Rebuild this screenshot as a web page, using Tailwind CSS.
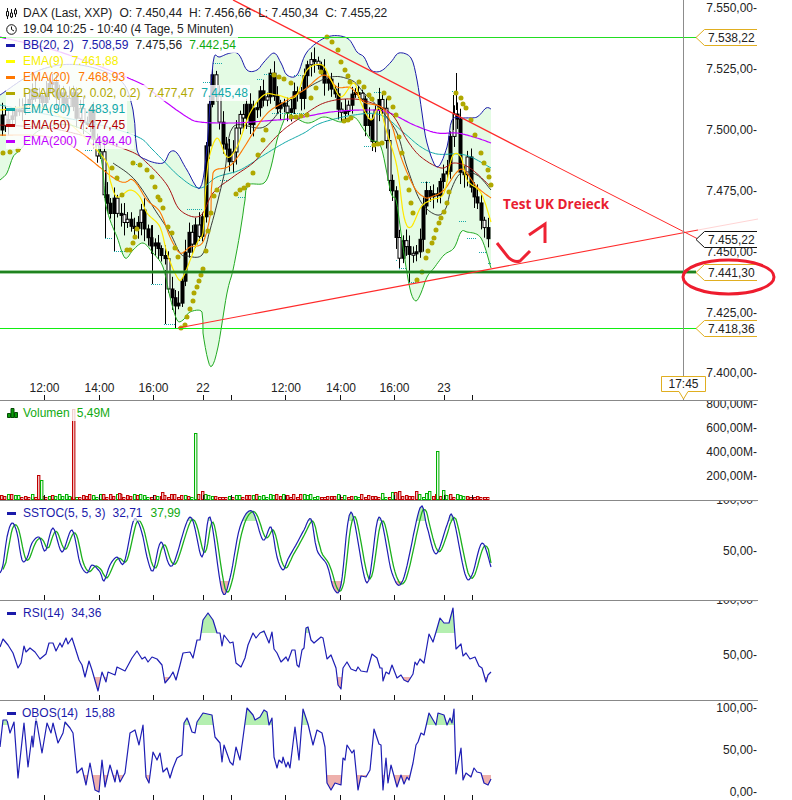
<!DOCTYPE html>
<html lang="de">
<head>
<meta charset="UTF-8">
<title>DAX Chart</title>
<script src="https://cdn.jsdelivr.net/npm/@tailwindcss/browser@4"></script>
</head>
<body class="bg-white">
<div class="w-[792px] h-[800px] overflow-hidden font-['Liberation_Sans',sans-serif] text-[12px] leading-[16px] text-[#222]">

  <!-- Main price panel -->
  <section class="relative h-[400px]">
    <svg id="main" class="block" width="792" height="400" viewBox="0 0 792 400">
      <polygon id="band" fill="#e4fbe4"></polygon>
      <g id="candles"></g>
      <path id="ticks" fill="none" stroke="#18a8a8" stroke-width="1" stroke-dasharray="1 1"></path>
      <g id="emas" fill="none" stroke-linejoin="round"></g>
      <path id="psar" fill="none" stroke="#b0a800" stroke-width="5" stroke-linecap="round"></path>

      <!-- horizontal levels -->
      <line x1="0" y1="37.5" x2="696" y2="37.5" stroke="#22dd22"></line>
      <line x1="0" y1="328.5" x2="696" y2="328.5" stroke="#11ee11"></line>
      <line x1="0" y1="272" x2="696" y2="272" stroke="#3f9f3f" stroke-width="3"></line>
      <line x1="0" y1="272" x2="696" y2="272" stroke="#006600"></line>

      <!-- trend lines -->
      <line x1="233" y1="0" x2="528" y2="152" stroke="#ff2a2a" stroke-width="1.4"></line>
      <line x1="528" y1="152" x2="698" y2="239" stroke="#ff2a2a" stroke-width="1"></line>
      <line x1="178" y1="328" x2="698" y2="230" stroke="#ff2a2a" stroke-width="1.1"></line>
      <line x1="698" y1="230" x2="758" y2="219" stroke="#ffd5d5" stroke-width="1"></line>

      <!-- axis -->
      <line x1="683.5" y1="0" x2="683.5" y2="400" stroke="#8c8c8c"></line>
      <g text-anchor="end" fill="#222" font-size="12">
        <text x="757" y="12">7.550,00-</text>
        <text x="757" y="73">7.525,00-</text>
        <text x="757" y="134">7.500,00-</text>
        <text x="757" y="195">7.475,00-</text>
        <text x="757" y="256">7.450,00-</text>
        <text x="757" y="317">7.425,00-</text>
        <text x="757" y="377">7.400,00-</text>
      </g>

      <!-- price tags -->
      <g fill="#fff" stroke-width="1">
        <path d="M757 29.5H704.5L696 37.5L704.5 45.5H757" stroke="#e0ae20"></path>
        <path d="M757 231.5H704.5L696 239.5L704.5 247.5H757" stroke="#111"></path>
        <path d="M757 264.5H704.5L696 272.5L704.5 280.5H757" stroke="#e0ae20"></path>
        <path d="M757 320.5H704.5L696 328.5L704.5 336.5H757" stroke="#e0ae20"></path>
      </g>
      <g fill="#222" font-size="12">
        <text x="708" y="42">7.538,22</text>
        <text x="708" y="244">7.455,22</text>
        <text x="708" y="277">7.441,30</text>
        <text x="708" y="333">7.418,36</text>
      </g>

      <!-- time cursor -->
      <path d="M661.5 376.5H705.5V391.5H688L683.5 399L679 391.5H661.5Z" fill="#fff" stroke="#e0ae20"></path>
      <text x="683.5" y="388" text-anchor="middle" fill="#222" font-size="12">17:45</text>

      <!-- time axis -->
      <g text-anchor="middle" fill="#222" font-size="12">
        <text x="44.5" y="392">12:00</text>
        <text x="99.5" y="392">14:00</text>
        <text x="153.5" y="392">16:00</text>
        <text x="203" y="392">22</text>
        <text x="286" y="392">12:00</text>
        <text x="341" y="392">14:00</text>
        <text x="394.5" y="392">16:00</text>
        <text x="444" y="392">23</text>
      </g>
      <path d="M44.5 395V400M99.5 395V400M153.5 395V400M203.5 395V400M231.5 395V400M285.5 395V400M340.5 395V400M394.5 395V400M444.5 395V400M472.5 395V400" stroke="#111"></path>

      <!-- drawn annotations -->
      <text x="503" y="209" fill="#e8202f" font-size="13.5" font-weight="700" font-family="Open Sans, sans-serif">Test UK Dreieck</text>
      <path d="M497 243L508 257Q514 263 520 261L530 251M529 235L545 224V243" fill="none" stroke="#ee2233" stroke-width="3"></path>
      <ellipse cx="728.5" cy="277" rx="45.5" ry="17" fill="none" stroke="#ee1c2e" stroke-width="3"></ellipse>
    </svg>

    <!-- Legend -->
    <div class="absolute left-[6px] top-[5px] flex flex-col items-start">
      <div class="flex items-center gap-[7px] h-[16px]">
        <span class="flex items-center gap-[6px]">
          <svg width="11" height="11" viewBox="0 0 11 11"><path d="M1.5 0V11M5.5 1V10M9.5 0V9" stroke="#111"></path><path d="M0.5 3.5H2.5V8H0.5ZM4.5 5H6.5V9H4.5ZM8.5 2H10.5V6H8.5Z" fill="#fff" stroke="#111" stroke-width="1"></path></svg>
          DAX (Last, XXP)
        </span>
        <span>O: 7.450,44</span><span>H: 7.456,66</span><span>L: 7.450,34</span><span>C: 7.455,22</span>
      </div>
      <div class="flex items-center gap-[6px] h-[16px]">
        <svg width="11" height="11" viewBox="0 0 11 11"><circle cx="5.5" cy="5.5" r="4.8" fill="none" stroke="#111"></circle><path d="M5.5 2.5V5.5L8 7" fill="none" stroke="#111"></path></svg>
        <span>19.04 10:25 - 10:40 (4 Tage, 5 Minuten)</span>
      </div>
      <div class="flex items-center h-[16px] bg-white/80 pr-[2px] text-[#1a1aaa]">
        <span class="w-[9px] h-[3px] bg-[#1a1aaa] mr-[8px]"></span>BB(20, 2)<span class="ml-[8px]">7.508,59</span><span class="ml-[7px] text-[#222]">7.475,56</span><span class="ml-[7px] text-[#11aa11]">7.442,54</span>
      </div>
      <div class="flex items-center h-[16px] bg-white/80 pr-[2px] text-[#f6f000]">
        <span class="w-[9px] h-[3px] bg-[#ffff00] mr-[8px]"></span>EMA(9)<span class="ml-[8px]">7.461,88</span>
      </div>
      <div class="flex items-center h-[16px] bg-white/80 pr-[2px] text-[#ff7700]">
        <span class="w-[9px] h-[3px] bg-[#ff7700] mr-[8px]"></span>EMA(20)<span class="ml-[8px]">7.468,93</span>
      </div>
      <div class="flex items-center h-[16px] bg-white/80 pr-[2px] text-[#b0a800]">
        <span class="w-[9px] h-[3px] bg-[#b0a800] mr-[8px]"></span>PSAR(0.02, 0.02, 0.2)<span class="ml-[7px]">7.477,47</span><span class="ml-[7px] text-[#10a8a8]">7.445,48</span>
      </div>
      <div class="flex items-center h-[16px] bg-white/80 pr-[2px] text-[#10a8a8]">
        <span class="w-[9px] h-[3px] bg-[#10a8a8] mr-[8px]"></span>EMA(90)<span class="ml-[8px]">7.483,91</span>
      </div>
      <div class="flex items-center h-[16px] bg-white/80 pr-[2px] text-[#b00000]">
        <span class="w-[9px] h-[3px] bg-[#b00000] mr-[8px]"></span>EMA(50)<span class="ml-[8px]">7.477,45</span>
      </div>
      <div class="flex items-center h-[16px] bg-white/80 pr-[2px] text-[#c000ff]">
        <span class="w-[9px] h-[3px] bg-[#c000ff] mr-[8px]"></span>EMA(200)<span class="ml-[8px]">7.494,40</span>
      </div>
    </div>
  </section>

  <!-- Volume -->
  <section class="relative h-[100px] w-[758px] border-t border-[#888]">
    <svg class="block" width="758" height="99" viewBox="0 401 758 99">
      <g id="vol"></g>
      <g text-anchor="end" fill="#222" font-size="12">
        <text x="757" y="408">800,00M-</text>
        <text x="757" y="432">600,00M-</text>
        <text x="757" y="456">400,00M-</text>
        <text x="757" y="480">200,00M-</text>
      </g>
      <path d="M44.5 495V500M99.5 495V500M153.5 495V500M203.5 495V500M231.5 495V500M285.5 495V500M340.5 495V500M394.5 495V500M444.5 495V500M472.5 495V500" stroke="#111"></path>
    </svg>
    <div class="absolute left-[7px] top-[4px] flex items-center h-[16px] bg-white/80 pr-[2px] text-[#11aa11]">
      <svg class="mr-[5px]" width="11" height="10" viewBox="0 0 11 10"><path d="M0.5 5.5H3.5V9.5H0.5ZM4 0.5H7V9.5H4ZM7.5 4.5H10.5V9.5H7.5Z" fill="#0a9a0a" stroke="#064a06"></path></svg>
      Volumen<span class="ml-[7px]">5,49M</span>
    </div>
  </section>

  <!-- SSTOC -->
  <section class="relative h-[100px] w-[758px] border-t border-[#888]">
    <svg class="block" width="758" height="99" viewBox="0 501 758 99">
      <g id="sstoc"></g>
      <g text-anchor="end" fill="#222" font-size="12">
        <text x="757" y="504">100,00-</text>
        <text x="757" y="555">50,00-</text>
      </g>
      <path d="M44.5 595V600M99.5 595V600M153.5 595V600M203.5 595V600M231.5 595V600M285.5 595V600M340.5 595V600M394.5 595V600M444.5 595V600M472.5 595V600" stroke="#111"></path>
    </svg>
    <div class="absolute left-[7px] top-[4px] flex items-center h-[16px] bg-white/60 pr-[2px] text-[#1a1aaa]">
      <span class="w-[9px] h-[3px] bg-[#1a1aaa] mr-[7px]"></span>SSTOC(5, 5, 3)<span class="ml-[7px]">32,71</span><span class="ml-[8px] text-[#11aa11]">37,99</span>
    </div>
  </section>

  <!-- RSI -->
  <section class="relative h-[100px] w-[758px] border-t border-[#888]">
    <svg class="block" width="758" height="99" viewBox="0 601 758 99">
      <g id="rsi"></g>
      <g text-anchor="end" fill="#222" font-size="12">
        <text x="757" y="604">100,00-</text>
        <text x="757" y="659">50,00-</text>
      </g>
      <path d="M44.5 695V700M99.5 695V700M153.5 695V700M203.5 695V700M231.5 695V700M285.5 695V700M340.5 695V700M394.5 695V700M444.5 695V700M472.5 695V700" stroke="#111"></path>
    </svg>
    <div class="absolute left-[7px] top-[4px] flex items-center h-[16px] pr-[2px] text-[#1a1aaa]">
      <span class="w-[9px] h-[3px] bg-[#1a1aaa] mr-[7px]"></span>RSI(14)<span class="ml-[7px]">34,36</span>
    </div>
  </section>

  <!-- OBOS -->
  <section class="relative h-[100px] w-[758px] border-t border-[#888]">
    <svg class="block" width="758" height="99" viewBox="0 701 758 99">
      <g id="obos"></g>
      <g text-anchor="end" fill="#222" font-size="12">
        <text x="757" y="712">100,00-</text>
        <text x="757" y="754">50,00-</text>
        <text x="757" y="796">0,00-</text>
      </g>
      <path d="M44.5 795V800M99.5 795V800M153.5 795V800M203.5 795V800M231.5 795V800M285.5 795V800M340.5 795V800M394.5 795V800M444.5 795V800M472.5 795V800" stroke="#111"></path>
    </svg>
    <div class="absolute left-[7px] top-[4px] flex items-center h-[16px] bg-white/60 pr-[2px] text-[#1a1aaa]">
      <span class="w-[9px] h-[3px] bg-[#1a1aaa] mr-[6px]"></span>OBOS(14)<span class="ml-[7px]">15,88</span>
    </div>
  </section>
</div>

<script>
const NS = 'http://www.w3.org/2000/svg';
function add(parent, tag, attrs) {
  const el = document.createElementNS(NS, tag);
  for (const k in attrs) el.setAttribute(k, attrs[k]);
  parent.appendChild(el);
  return el;
}
const $ = id => document.getElementById(id);
const pts = a => a.map(p => p[0] + ',' + p[1]).join(' ');
function lerp(a, x) {
  for (let i = 1; i < a.length; i++) {
    if (x <= a[i][0]) {
      const t = (x - a[i-1][0]) / (a[i][0] - a[i-1][0]);
      return a[i-1][1] + t * (a[i][1] - a[i-1][1]);
    }
  }
  return a[a.length-1][1];
}
// rounds a hand-read series off into a curve
function smooth(a) {
  const out = [];
  for (let i = 0; i < a.length - 1; i++) {
    const p0 = a[Math.max(i-1, 0)], p1 = a[i], p2 = a[i+1], p3 = a[Math.min(i+2, a.length-1)];
    const n = Math.max(2, Math.ceil((p2[0] - p1[0]) / 1.5));
    for (let j = 0; j < n; j++) {
      const t = j / n, t2 = t * t, t3 = t2 * t;
      const f = k => 0.5 * (2*p1[k] + (p2[k]-p0[k])*t + (2*p0[k]-5*p1[k]+4*p2[k]-p3[k])*t2 + (3*p1[k]-p0[k]-3*p2[k]+p3[k])*t3);
      out.push([+f(0).toFixed(1), +f(1).toFixed(1)]);
    }
  }
  out.push(a[a.length-1]);
  return out;
}
let seed = 7;
function rnd() { seed = (seed * 16807) % 2147483647; return seed / 2147483647; }

// Bollinger bands
const bbUp = smooth([[0,95],[40,70],[80,65],[120,80],[133,110],[137,150],[147,160],[163,163],[170,152],[177,153],[187,170],[200,188],[207,147],[213,63],[220,57],[237,53],[247,70],[257,70],[264,62],[274,53],[281,63],[287,75],[297,75],[307,52],[327,37],[347,38],[357,52],[364,57],[371,70],[381,71],[391,62],[399,53],[411,58],[417,80],[422,113],[427,143],[437,167],[447,147],[452,120],[464,118],[477,117],[486,108],[491,109]]);
const bbLo = smooth([[0,180],[7,173],[13,157],[20,150],[40,130],[70,125],[95,140],[103,170],[105,200],[110,220],[117,237],[125,258],[133,250],[143,243],[153,253],[163,267],[170,297],[177,320],[183,320],[190,312],[202,312],[203,333],[208,360],[212,366],[218,347],[227,293],[233,270],[240,233],[245,200],[248,185],[264,183],[271,167],[277,140],[284,120],[287,113],[307,123],[324,117],[341,122],[354,117],[364,130],[371,140],[381,147],[391,193],[396,200],[401,233],[406,267],[411,293],[416,301],[421,293],[427,277],[434,268],[444,255],[454,248],[461,232],[467,232],[481,238],[491,268]]);
const bbMid = smooth([[113,163],[135,180],[157,213],[170,233],[180,253],[187,256],[202,255],[210,230],[218,200],[225,170],[233,127],[264,127],[290,100],[327,78],[351,80],[364,93],[381,110],[397,133],[407,167],[421,202],[437,215],[446,208],[451,190],[461,173],[477,175],[491,190]]);
$('band').setAttribute('points', pts(bbUp.concat(bbLo.slice().reverse())));

// Candles
const mid = [[0,130],[5,120],[10,110],[20,100],[30,90],[40,95],[50,85],[60,90],[70,100],[80,110],[90,120],[100,160],[105,205],[110,220],[115,205],[120,225],[125,210],[133,220],[140,215],[148,235],[155,245],[162,250],[168,285],[175,295],[181,300],[185,250],[190,235],[197,225],[200,232],[203,210],[207,120],[212,75],[216,100],[222,130],[228,165],[232,150],[238,120],[245,110],[250,115],[258,95],[264,90],[270,85],[278,100],[285,100],[292,105],[300,95],[306,60],[312,50],[316,60],[322,60],[326,80],[332,100],[338,110],[345,105],[352,90],[358,95],[364,115],[368,120],[372,130],[376,120],[380,100],[385,120],[388,170],[392,180],[396,230],[400,255],[404,250],[408,240],[412,255],[418,250],[424,195],[430,195],[436,200],[442,185],[448,180],[452,120],[456,100],[460,170],[466,160],[470,180],[476,195],[481,215],[485,225],[490,235]];
const cg = $('candles');
let prev = lerp(mid, 0);
for (let x = 1.5; x < 490; x += 3.4) {
  const c = lerp(mid, x) + (rnd() - 0.5) * 24;
  const top = Math.min(prev, c), bot = Math.max(prev, c);
  const wx = Math.round(x) + 0.5;
  add(cg, 'line', {x1: wx, x2: wx, y1: top - 3 - rnd() * 10, y2: bot + 3 + rnd() * 10, stroke: '#000'});
  add(cg, 'rect', {x: wx - 1.5, y: top, width: 3, height: Math.max(bot - top, 2), fill: rnd() < 0.72 ? '#000' : '#fff', stroke: '#000'});
  prev = c;
}
// the long wicks
[[456.5,73,110],[152.5,225,284],[165.5,270,324],[175.5,290,328],[105.5,170,238],[114.5,200,251],[453.5,95,130],[409.5,240,282]].forEach(w =>
  add(cg, 'line', {x1: w[0], x2: w[0], y1: w[1], y2: w[2], stroke: '#000'}));

// teal high/low marks
const marks = [[213,222,63],[203,210,82],[257,263,79],[85,92,150],[132,138,164],[220,230,180],[238,245,197],[105,113,238],[114,125,251],[151,163,284],[164,175,324],[187,202,209],[307,327,37],[264,272,74],[294,302,75],[291,304,113],[272,286,113],[364,374,146],[374,382,92],[421,431,182],[452,457,91],[399,406,268],[409,416,282],[459,466,221],[467,477,238],[479,486,252],[488,491,263],[396,398,260]];
$('ticks').setAttribute('d', marks.map(m => 'M' + m[0] + ' ' + (m[2] + 0.5) + 'H' + m[1]).join(''));

// Moving averages
const ema90 = [[0,105],[50,115],[100,125],[138,137],[153,150],[180,177],[200,188],[217,177],[240,170],[264,155],[284,143],[304,133],[321,123],[354,115],[381,115],[404,133],[421,147],[437,154],[457,154],[471,157],[491,168]];
const ema50 = [[0,125],[60,130],[127,150],[147,163],[167,185],[180,210],[200,216],[213,193],[233,177],[253,163],[264,150],[281,132],[297,120],[324,103],[354,99],[379,106],[394,117],[407,140],[421,157],[441,168],[454,163],[470,168],[491,187]];
const ema200 = [[0,37],[60,52],[133,80],[150,90],[167,103],[187,117],[200,122],[233,123],[264,121],[297,118],[331,112],[364,110],[387,112],[414,125],[437,133],[457,133],[477,138],[491,143]];
const ema20 = [[0,135],[60,140],[117,180],[133,180],[147,200],[160,212],[170,237],[180,253],[190,247],[203,242],[211,210],[213,173],[233,163],[264,117],[284,102],[304,90],[324,75],[337,87],[351,88],[364,102],[381,107],[391,123],[401,157],[414,187],[424,197],[431,197],[444,190],[456,173],[464,170],[477,187],[491,198]];
const ema9 = [[0,110],[50,110],[103,157],[110,180],[117,197],[130,190],[140,197],[147,213],[160,227],[167,253],[177,277],[183,277],[197,243],[203,233],[205,200],[208,163],[217,138],[227,157],[237,147],[250,113],[264,95],[277,95],[295,97],[307,70],[322,65],[331,80],[341,97],[354,83],[361,103],[371,120],[379,108],[387,133],[397,167],[404,217],[411,227],[421,207],[431,200],[444,193],[452,157],[461,157],[467,180],[481,193],[491,222]];
const eg = $('emas');
[[ema200,'#c000ff',1.2],[ema90,'#10a8a8',1],[ema50,'#a81010',1],[bbMid,'#222',0.9],[ema20,'#ff7700',1.1],[ema9,'#ffe800',1.2]].forEach(s =>
  add(eg, 'polyline', {points: pts(s[0] === bbMid ? s[0] : smooth(s[0])), stroke: s[1], 'stroke-width': s[2]}));
add(eg, 'polyline', {points: pts(bbLo), stroke: '#22aa22', 'stroke-width': 1});
add(eg, 'polyline', {points: pts(bbUp), stroke: '#1a1aaa', 'stroke-width': 1});

// Parabolic SAR dots
const sar = [[3,153],[10,152],[18,150],[112,168],[117,178],[122,195],[127,250],[130,250],[133,243],[135,237],[137,229],[133,163],[140,165],[147,170],[152,177],[155,187],[158,197],[160,200],[163,208],[168,227],[172,233],[175,248],[178,257],[181,328],[185,325],[187,317],[190,309],[193,301],[194,293],[197,287],[199,281],[201,275],[203,269],[206,251],[208,231],[211,213],[214,196],[217,190],[236,194],[240,190],[244,188],[248,185],[253,173],[258,155],[263,140],[266,130],[274,75],[279,77],[284,79],[291,83],[291,117],[296,117],[301,116],[307,115],[311,98],[316,88],[321,72],[327,37],[332,42],[338,50],[341,62],[345,70],[348,76],[350,82],[344,121],[348,120],[351,118],[359,82],[364,87],[369,95],[372,99],[374,145],[378,144],[382,143],[384,93],[389,98],[393,107],[396,115],[399,137],[402,153],[406,178],[409,190],[411,203],[413,213],[417,280],[422,272],[426,258],[428,251],[432,243],[434,238],[436,230],[439,223],[441,218],[444,212],[447,203],[449,192],[456,93],[461,98],[463,104],[466,108],[471,120],[475,135],[481,153],[484,163],[488,170],[489,177],[491,185]];
$('psar').setAttribute('d', sar.map(p => 'M' + p[0] + ' ' + p[1] + 'h0').join(''));

// Volume
const vg = $('vol');
function bar(x, top, red) {
  add(vg, 'rect', {x: x + 0.5, y: top + 0.5, width: 2.4, height: 499 - top, fill: red ? '#f2c0c0' : '#e6fbe6', stroke: red ? '#c00000' : '#00b000'});
}
for (let i = 0; i < 144; i++) {
  const x = Math.round(i * 3.4);
  const busy = x > 380 && x < 440 ? 7 : 4;
  bar(x, 497 - Math.floor(rnd() * busy), rnd() < 0.62);
}
bar(72, 409, true); bar(37, 475, true); bar(40, 480, false); bar(194, 433, false); bar(436, 451, false); bar(442, 490, false);
bar(201, 491, true); bar(161, 492, true); bar(118, 493, true); bar(394, 492, true);

// Oscillator panels
function osc(id, data, hi, lo, green) {
  const g = $(id), xa = data[0][0], xb = data[data.length-1][0];
  const cid = id + 'Clip';
  const defs = add(g, 'defs', {});
  const c1 = add(defs, 'clipPath', {id: cid + 'H'}); add(c1, 'rect', {x: 0, y: 0, width: 792, height: hi});
  const c2 = add(defs, 'clipPath', {id: cid + 'L'}); add(c2, 'rect', {x: 0, y: lo, width: 792, height: 200});
  const close = y => pts(data.concat([[xb, y], [xa, y]]));
  add(g, 'polygon', {points: close(hi), fill: '#b4efb0', 'clip-path': 'url(#' + cid + 'H)'});
  add(g, 'polygon', {points: close(lo), fill: '#eeb0ac', 'clip-path': 'url(#' + cid + 'L)'});
  if (green) add(g, 'polyline', {points: pts(green), fill: 'none', stroke: '#1cb01c', 'stroke-width': 1.3});
  add(g, 'polyline', {points: pts(data), fill: 'none', stroke: '#1e1eb4', 'stroke-width': 1.2, 'stroke-linejoin': 'round'});
}
const sstoc = smooth([[0,573],[3,565],[7,537],[12,523],[17,533],[22,560],[27,558],[32,543],[39,537],[43,548],[46,550],[53,528],[62,552],[72,530],[80,563],[87,573],[92,565],[100,572],[104,581],[110,565],[117,557],[124,563],[133,522],[138,522],[143,537],[147,557],[153,571],[161,542],[172,566],[190,517],[202,557],[210,517],[222,591],[230,578],[240,527],[252,511],[263,540],[271,527],[277,557],[283,570],[288,559],[297,543],[304,530],[311,519],[317,550],[327,565],[334,589],[341,585],[351,512],[367,583],[379,517],[392,573],[403,580],[420,508],[427,527],[436,554],[447,525],[453,517],[465,574],[472,575],[482,543],[491,567]]);
// the signal line trails the fast one
const sstocG = sstoc.map((p, i) => {
  const win = sstoc.slice(Math.max(0, i - 2), i + 3);
  return [+(p[0] + 3).toFixed(1), +(win.reduce((s, q) => s + q[1], 0) / win.length).toFixed(1)];
}).filter(p => p[0] <= 489).concat([[491,563]]);
osc('sstoc', sstoc, 521, 581, sstocG);
const rsi = [[0,647],[3,639],[8,645],[13,653],[18,668],[21,663],[24,646],[26,652],[30,648],[35,652],[40,659],[46,654],[49,643],[53,643],[56,651],[60,643],[62,647],[66,638],[68,644],[72,638],[79,660],[82,665],[85,677],[89,661],[92,670],[94,677],[98,691],[102,672],[106,682],[108,672],[115,675],[117,667],[125,671],[132,658],[137,651],[142,659],[145,657],[148,662],[152,657],[157,659],[162,665],[165,683],[170,677],[173,672],[176,680],[180,665],[183,653],[190,652],[193,658],[197,640],[200,640],[203,620],[208,613],[213,620],[217,633],[220,633],[222,646],[224,635],[230,643],[233,642],[236,663],[241,667],[245,658],[248,645],[253,633],[256,638],[260,633],[264,631],[269,643],[272,632],[274,649],[277,653],[281,662],[286,657],[288,661],[292,650],[295,650],[297,665],[299,667],[302,650],[304,648],[306,628],[308,627],[311,640],[314,643],[321,637],[323,638],[327,659],[331,655],[336,668],[338,685],[341,689],[343,668],[347,662],[351,669],[356,671],[358,667],[361,671],[367,672],[372,654],[377,658],[380,668],[382,668],[383,681],[386,672],[389,674],[392,665],[397,678],[401,675],[404,680],[408,682],[413,674],[415,662],[417,665],[420,659],[424,663],[429,634],[433,642],[436,632],[440,618],[444,623],[449,623],[453,608],[456,649],[461,644],[463,656],[466,653],[470,659],[475,657],[479,666],[482,668],[486,682],[488,675],[491,672]];
osc('rsi', rsi, 633, 677);
const obos = [[0,747],[3,720],[7,720],[10,733],[14,722],[18,778],[24,723],[28,767],[32,736],[33,747],[36,718],[42,753],[47,723],[51,733],[53,723],[58,743],[63,733],[65,722],[70,728],[73,733],[77,773],[82,768],[86,785],[90,763],[95,790],[99,792],[102,760],[105,787],[110,765],[115,782],[117,770],[120,782],[125,773],[130,733],[135,730],[139,745],[143,725],[146,777],[149,783],[153,752],[157,760],[160,753],[163,772],[167,768],[170,778],[173,768],[177,758],[182,755],[184,723],[187,718],[189,723],[192,732],[195,733],[197,722],[203,713],[212,715],[215,737],[220,743],[222,762],[224,745],[230,762],[233,765],[236,747],[240,760],[247,708],[253,715],[255,720],[260,717],[264,710],[267,712],[269,725],[272,718],[274,757],[277,768],[279,760],[282,763],[283,757],[286,767],[288,762],[290,768],[295,727],[299,760],[303,709],[308,724],[313,745],[317,730],[322,733],[325,747],[327,783],[331,790],[335,783],[341,785],[343,758],[345,760],[347,745],[352,753],[354,750],[358,790],[361,776],[366,777],[370,770],[374,729],[379,744],[381,745],[383,790],[386,758],[388,783],[391,765],[397,787],[401,775],[404,784],[407,777],[409,780],[413,763],[416,745],[418,742],[421,733],[424,735],[429,713],[436,725],[438,713],[444,715],[447,725],[450,718],[452,723],[454,709],[456,774],[461,748],[463,780],[466,773],[471,777],[474,768],[477,772],[481,773],[484,783],[488,785],[491,779]];
osc('obos', obos, 725, 775);
</script>
</body>
</html>
